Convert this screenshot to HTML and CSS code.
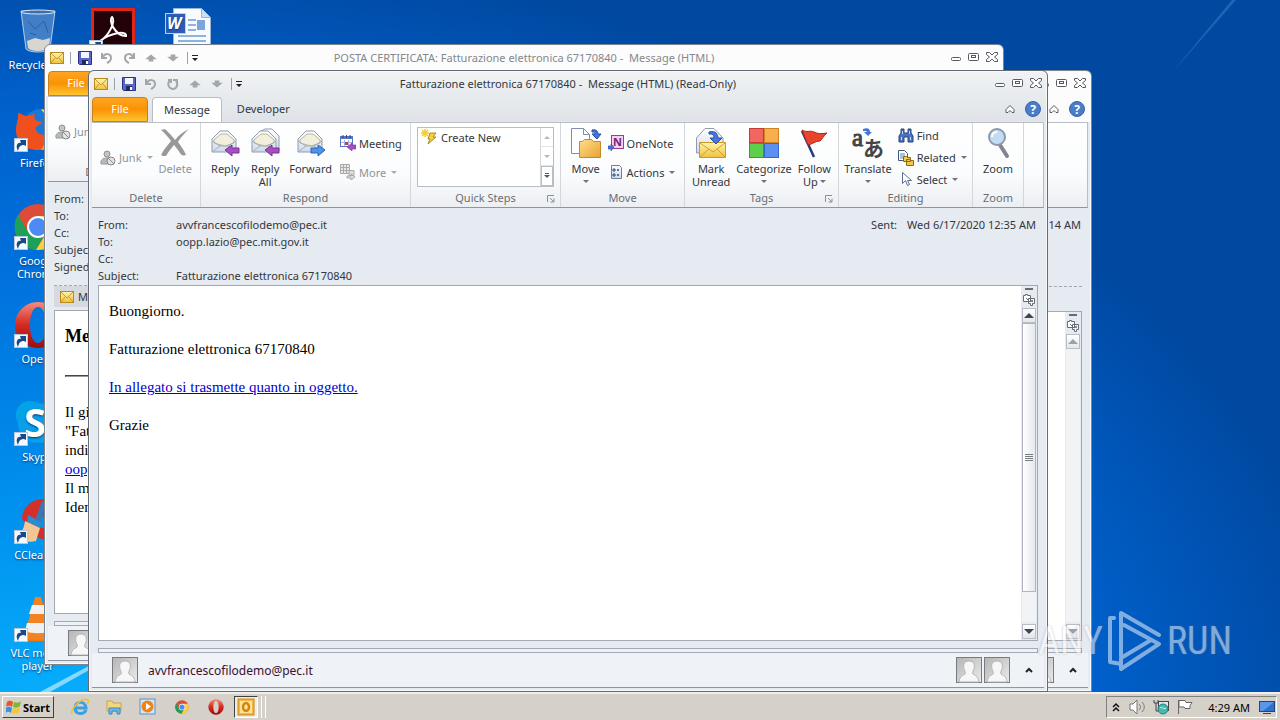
FILE: index.html
```
<!DOCTYPE html>
<html lang="en">
<head>
    <meta charset="UTF-8">
    <meta name="viewport" content="width=device-width, initial-scale=1.0">
    <title>Fatturazione elettronica 67170840 - Message (HTML)</title>
    <link rel="stylesheet" href="styles.css">
</head>
<body>
    <!-- shared icons -->
    <svg class="sprite" aria-hidden="true">
        <defs>
            <linearGradient id="gYellow" x1="0" y1="0" x2="0" y2="1"><stop offset="0" stop-color="#fff3b0"/><stop offset="1" stop-color="#f0c23c"/></linearGradient>
            <linearGradient id="gPaper" x1="0" y1="0" x2="0" y2="1"><stop offset="0" stop-color="#ffffff"/><stop offset="1" stop-color="#cfd9e8"/></linearGradient>
            <linearGradient id="gFolder" x1="0" y1="0" x2="1" y2="1"><stop offset="0" stop-color="#ffdf91"/><stop offset="1" stop-color="#e9a32c"/></linearGradient>
            <linearGradient id="gRed" x1="0" y1="0" x2="0" y2="1"><stop offset="0" stop-color="#f58b7c"/><stop offset=".5" stop-color="#d22a22"/><stop offset="1" stop-color="#a00c0c"/></linearGradient>
            <linearGradient id="gPerson" x1="0" y1="0" x2="1" y2="1"><stop offset="0" stop-color="#b4b4b4"/><stop offset="1" stop-color="#ececec"/></linearGradient>
        </defs>
        <symbol id="mail" viewBox="0 0 14 12">
            <rect x=".5" y=".5" width="13" height="11" fill="url(#gYellow)" stroke="#b98a1e"/>
            <path d="M1 1l6 6 6-6M1 11l4-5M13 11l-4-5" fill="none" stroke="#c79a2c"/>
        </symbol>
        <symbol id="save" viewBox="0 0 14 14">
            <path d="M.5.5h13v13h-12l-1-1z" fill="#5a66c8" stroke="#2b3282"/>
            <path d="M3 1h8v6H3z" fill="#f4f6ff"/>
            <path d="M4 9h6v5H4z" fill="#23285e"/><path d="M8 10h2v3H8z" fill="#fff"/>
        </symbol>
        <symbol id="undo" viewBox="0 0 14 14"><path d="M2 2v5h5M3 6c2-4 8-4 8 1 0 3-2 4-4 5" fill="none" stroke="#a3a6aa" stroke-width="2"/></symbol>
        <symbol id="redo" viewBox="0 0 14 14"><path d="M12 2v5H7M11 6C9 2 3 2 3 7c0 3 2 4 4 5" fill="none" stroke="#a3a6aa" stroke-width="2"/></symbol>
        <symbol id="repeat" viewBox="0 0 14 14"><path d="M4 3C0 8 4 12 7 12s6-4 3-8M7 3h4v4M2 3h3v3" fill="none" stroke="#a3a6aa" stroke-width="2"/></symbol>
        <symbol id="up" viewBox="0 0 12 12"><path d="M6 3l5 4H8v2H4V7H1z" fill="#a3a6aa"/></symbol>
        <symbol id="down" viewBox="0 0 12 12"><path d="M6 9l5-4H8V3H4v2H1z" fill="#a3a6aa"/></symbol>
        <symbol id="qat" viewBox="0 0 8 8"><path d="M1 1h6v1H1zM1 4h6L4 7z" fill="#222"/></symbol>
        <symbol id="win-min" viewBox="0 0 12 12"><rect x="1.5" y="5.5" width="9" height="3" rx="1" fill="#fff" stroke="#555a62"/></symbol>
        <symbol id="win-max" viewBox="0 0 12 12"><rect x=".5" y="1.5" width="10" height="7" rx="1" fill="#fff" stroke="#555a62"/><rect x="3.5" y="3.5" width="4" height="2" fill="#fff" stroke="#555a62"/></symbol>
        <symbol id="win-close" viewBox="0 0 12 12"><path d="M.5.5h3L6 3 8.500.5h3v2l-3 2.500 3 2.500v2h-3L6 7 3.500 9.500h-3v-2L3.500 5l-3-2.500z" fill="#fff" stroke="#555a62"/></symbol>
        <symbol id="collapse" viewBox="0 0 10 10"><path d="M1 5.500l4-4 4 4v3H7l-2-2-2 2H1z" fill="#fff" stroke="#555a62"/></symbol>
        <symbol id="junk" viewBox="0 0 16 16">
            <circle cx="7" cy="4" r="3" fill="#c4c4c4" stroke="#909090"/>
            <path d="M1 14c-1-5 3-6 6-6s6 1 6 6z" fill="#b9b9b9" stroke="#999"/>
            <circle cx="11" cy="11" r="4" fill="#e4e4e4" stroke="#888"/><path d="M8 8l6 6" stroke="#888"/>
        </symbol>
        <symbol id="delete" viewBox="0 0 32 32">
            <path d="M2 3c3-1 5-1 6 1 3 3 6 6 8 9 4-5 8-8 14-11-5 5-9 9-11 13 3 4 6 8 8 13-3 1-5 0-6-2-2-3-4-6-6-8-3 4-6 7-8 11-2 0-4 0-5-1 3-6 7-10 10-14C9 10 6 6 2 3z" fill="#999"/>
        </symbol>
        <symbol id="envelope" viewBox="0 0 32 32">
            <path d="M3 12l8-8h8l8 8v13H3z" fill="url(#gPaper)" stroke="#8f9bb0"/>
            <path d="M5 13l7-6h6l7 6v3l-9 3-11-3z" fill="#f2f0dc" stroke="#b9b79c"/>
            <path d="M3 14l8 5h8l8-5M3 25l8-6M27 25l-8-6" fill="none" stroke="#a3adbf"/>
        </symbol>
        <symbol id="reply" viewBox="0 0 32 32">
            <use href="#envelope"/>
            <path d="M16 23l7-5v3h7v5h-7v3z" fill="#a64fc0" stroke="#7d2f98"/>
        </symbol>
        <symbol id="reply-all" viewBox="0 0 32 32">
            <path d="M10 5l6-3h7l7 7v15h-8" fill="url(#gPaper)" stroke="#8f9bb0"/>
            <use href="#reply"/>
        </symbol>
        <symbol id="forward" viewBox="0 0 32 32">
            <use href="#envelope"/>
            <path d="M30 23l-7-5v3h-7v5h7v3z" fill="#4f93ea" stroke="#2b62b5"/>
        </symbol>
        <symbol id="meeting" viewBox="0 0 16 16">
            <rect x=".5" y="1.500" width="12" height="10" fill="#fff" stroke="#5874c4"/><path d="M1 2h11v2H1z" fill="#5874c4"/>
            <path d="M3 0v3M6.500 0v3M10 0v3" stroke="#2b3f8c"/><path d="M1 7.500h11M4.500 5v6M8.500 5v6" stroke="#a5b4e4"/>
            <rect x="5" y="7" width="3" height="3" fill="#d83a2c"/>
            <path d="M7 12l5-4v2h4v4h-4v2z" fill="#a64fc0" stroke="#7d2f98" stroke-width=".6"/>
        </symbol>
        <symbol id="more" viewBox="0 0 16 16">
            <path d="M.5.5h9v9h-9zM.5 3.500h9M.5 6.500h9M3.500 0v9M6.500 0v9" fill="#e8e8e8" stroke="#aaa"/>
            <path d="M9 6.500h5v5H9zM7 12h4v-2l4 3-4 3v-2H7z" fill="#ddd" stroke="#aaa"/>
        </symbol>
        <symbol id="create" viewBox="0 0 16 16">
            <path d="M9 4h6l-3 4h3l-8 7 2-5H7z" fill="#f6cf45" stroke="#a98c2c"/>
            <path d="M4 0v8M0 4h8M1 1l6 6M7 1L1 7" stroke="#f2cf2d" stroke-width="1.500"/>
        </symbol>
        <symbol id="move" viewBox="0 0 32 32">
            <path d="M1.500 1.500h12l6 6v19h-18z" fill="#fff" stroke="#7d8eae"/><path d="M13.500 1.500v6h6" fill="none" stroke="#7d8eae"/>
            <path d="M9.500 14.500h3l2-2h7l2 2h7v16h-21z" fill="url(#gFolder)" stroke="#c08a28"/>
            <path d="M22 3c5-1 6 2 6 4h3l-4 5-5-5h3c0-2-1-2-3-2z" fill="#4576d8" stroke="#284fa6"/>
        </symbol>
        <symbol id="onenote" viewBox="0 0 16 16">
            <rect x="3.500" y=".5" width="12" height="13" fill="#f3d3ef" stroke="#9b3b97"/>
            <text x="5" y="11" font-size="11" font-weight="bold" fill="#7b1f79">N</text>
            <path d="M6 12l-3-3v2H0v3h3v2z" fill="#4576d8" stroke="#284fa6" stroke-width=".6"/>
        </symbol>
        <symbol id="actions" viewBox="0 0 16 16">
            <path d="M3.500 1.500h8l2 2v11h-10z" fill="url(#gPaper)" stroke="#6c7f9e"/>
            <path d="M5 5h2v2H5zM5 10h2v2H5z" fill="none" stroke="#2d4a80"/><path d="M9 6h2M9 11h2" stroke="#2d4a80" stroke-width="1.500"/>
        </symbol>
        <symbol id="unread" viewBox="0 0 32 32">
            <path d="M1.500 11L10 1.500h9l9 9.500v15H1.500z" fill="url(#gPaper)" stroke="#8f9bb0"/>
            <path d="M4.500 15.500h26v15h-26z" fill="url(#gYellow)" stroke="#c99a25"/>
            <path d="M5 16l13 9 12-9M5 30l9-8M30 30l-8-8" fill="none" stroke="#d2a12b"/>
            <path d="M14 5c7-2 9 3 9 6h4l-6 6-6-6h4c0-3-1-4-5-4z" fill="#4576d8" stroke="#284fa6"/>
        </symbol>
        <symbol id="categorize" viewBox="0 0 32 32">
            <rect x="1.500" y="1.500" width="14" height="14" fill="#f26560" stroke="#c33b36"/>
            <rect x="16.500" y="1.500" width="14" height="14" fill="#f7ae4c" stroke="#cf8323"/>
            <rect x="1.500" y="16.500" width="14" height="14" fill="#5cd04c" stroke="#36a028"/>
            <rect x="16.500" y="16.500" width="14" height="14" fill="#5b8ff0" stroke="#3567c9"/>
        </symbol>
        <symbol id="flag" viewBox="0 0 32 32">
            <path d="M4 4l12 26" stroke="#27387c" stroke-width="2.500"/>
            <path d="M4 3c5 3 8 0 12 2s7 2 13 1c-4 3-5 7-7 8-5 0-7 3-12 4z" fill="#e8442e" stroke="#b32713"/>
        </symbol>
        <symbol id="translate" viewBox="0 0 32 32">
            <text x="0" y="19" font-family="Liberation Serif, serif" font-size="25" fill="#444" stroke="#444">a</text>
            <text x="11" y="29" font-family="Noto Sans CJK JP, sans-serif" font-size="21" font-weight="bold" fill="#444">あ</text>
            <path d="M11 2c5-2 7 0 7 3h2l-4 4-4-4h3c0-1-1-1-4-1z" fill="#4576d8"/>
        </symbol>
        <symbol id="find" viewBox="0 0 16 16">
            <path d="M3 1h3v4h4V1h3v4l2 3v6h-5V9H6v5H1V8l2-3z" fill="#4a72be" stroke="#26437f"/>
            <path d="M3.500 9v3M12.500 9v3M4.500 3v3M11.500 3v3" stroke="#c9dbf7"/>
        </symbol>
        <symbol id="related" viewBox="0 0 16 16">
            <path d="M.5.5h6l3 3v7h-9z" fill="#fff" stroke="#3f577f"/><path d="M2 4h5M2 6h5M2 8h4" stroke="#6480ac"/>
            <path d="M5.500 6.500h3l1 1h3v4h-7zM8.500 9.500h3l1 1h3v5h-7z" fill="#f5c945" stroke="#8b6a14"/>
        </symbol>
        <symbol id="select" viewBox="0 0 16 16"><path d="M4.500 1.500v11l3-3 2 5 2-1-2-4h4z" fill="#fff" stroke="#5d6f93"/></symbol>
        <symbol id="magnifier" viewBox="0 0 32 32">
            <path d="M18 18l7 11" stroke="#82878f" stroke-width="4" stroke-linecap="round"/>
            <circle cx="15" cy="10" r="8" fill="#c3dcf5" stroke="#8d99aa" stroke-width="2"/>
            <path d="M10 10c0-4 3-5 5-5" fill="none" stroke="#fff" stroke-width="2"/>
        </symbol>
        <symbol id="launcher" viewBox="0 0 8 8"><path d="M.5 7V.5H7M3 3l4 4M7 3.500V7H3.500" fill="none" stroke="#888f99"/></symbol>
        <symbol id="browse" viewBox="0 0 12 12">
            <path d="M.5 1.500h2v-1h2v1h3v6h-7zM5.500 4.500h6v5h-2v2h-2v-2h-2z" fill="#fff" stroke="#666b74"/><path d="M3 4l2 2M7 6l3 2M10 6L7 8" stroke="#666b74"/>
        </symbol>
        <symbol id="person" viewBox="0 0 26 26">
            <rect x=".5" y=".5" width="25" height="25" fill="url(#gPerson)" stroke="#777b80"/>
            <path d="M13 4c5 0 6 4 5 8-1 3-2 3-1 5 2 2 5 1 6 8H3c1-7 4-6 6-8 1-2 0-2-1-5-1-4 0-8 5-8z" fill="#f7f7f7" stroke="#b5b5b5"/>
        </symbol>
        <symbol id="chevron" viewBox="0 0 10 10"><path d="M2 7l3-3 3 3" fill="none" stroke="#222" stroke-width="2"/></symbol>
        <symbol id="arrow" viewBox="0 0 14 14">
            <rect x=".5" y=".5" width="13" height="13" fill="#f5f8fc" stroke="#b7c6d8"/>
            <path d="M4 13C1 7 4 4 7 5L6 2h6v6l-2-1c-4 0-5 2-6 6z" fill="#174a8c"/>
        </symbol>
        <symbol id="chrome" viewBox="0 0 48 48">
            <circle cx="24" cy="24" r="23" fill="#dd4b39"/>
            <path d="M4 12a23 23 0 0 0 18 35l10-18H14z" fill="#1ea05a"/>
            <path d="M22 47a23 23 0 0 0 22-34H24l9 16z" fill="#fdd043"/>
            <circle cx="24" cy="24" r="11" fill="#fff"/><circle cx="24" cy="24" r="9" fill="#4c8bf5"/>
        </symbol>
        <symbol id="opera" viewBox="0 0 48 48">
            <path fill-rule="evenodd" d="M24 1a23 23 0 1 0 .1 0zM24 6c5 0 8 8 8 18s-3 18-8 18-8-8-8-18 3-18 8-18z" fill="url(#gRed)"/>
        </symbol>
    </svg>

    <main class="desktop">
        <svg class="rays" viewBox="0 0 1280 692" preserveAspectRatio="none" aria-hidden="true">
            <path d="M40 692L100 660v4L50 692z" fill="#bfeaff" fill-opacity=".7"/>
            <path d="M1170 75L1232 0h4z" fill="#6aa6e4" fill-opacity=".3"/>
        </svg>

        <nav class="shortcuts">
            <a class="shortcut" href="#">
                <svg class="pic" viewBox="0 0 48 48"><path d="M7 4h34l-5 38c-3 4-21 4-24 0z" fill="#8fb4dc" fill-opacity=".45" stroke="#b5cce6"/><ellipse cx="24" cy="5" rx="17" ry="2" fill="#3f6eae" stroke="#dbe7f4"/><path d="M13 34l8-3 8 2 7-2-1 10c-4 4-18 4-21 0z" fill="#d9d6d2"/><path d="M14 14l7 8 9-8 4 12M16 26l6 2" fill="none" stroke="#2f5da0"/></svg>
                <span>Recycle Bin</span>
            </a>
            <a class="shortcut" href="#">
                <svg class="pic" viewBox="0 0 48 48">
                    <circle cx="27" cy="23" r="19" fill="#1a78d8"/><path d="M27 4c12 2 19 10 19 19l-8-6c-4-6-8-8-11-13z" fill="#ffd83a"/>
                    <path d="M4 8c3 0 5 3 9 3l8-2c-1 3-1 5 2 7l5 1c-1 4-8 3-6 8 3 6 10 6 16 2 4-3 5-6 8-8 0 16-8 26-22 26S2 36 2 25C2 18 5 14 4 8z" fill="#f0501e"/>
                    <path d="M30 40c10-3 14-9 15-17 2 9-3 22-18 22z" fill="#ff9d1c"/></svg>
                <svg class="arrow"><use href="#arrow"/></svg>
                <span>Firefox</span>
            </a>
            <a class="shortcut" href="#">
                <svg class="pic"><use href="#chrome"/></svg>
                <svg class="arrow"><use href="#arrow"/></svg>
                <span>Google Chrome</span>
            </a>
            <a class="shortcut" href="#">
                <svg class="pic"><use href="#opera"/></svg>
                <svg class="arrow"><use href="#arrow"/></svg>
                <span>Opera</span>
            </a>
            <a class="shortcut" href="#">
                <svg class="pic" viewBox="0 0 48 48"><circle cx="16" cy="16" r="14" fill="#00a5e6"/><circle cx="32" cy="32" r="14" fill="#0088d4"/><circle cx="24" cy="24" r="20" fill="#08a0e8"/><text x="10" y="38" font-size="40" font-weight="bold" fill="#fff">S</text></svg>
                <svg class="arrow"><use href="#arrow"/></svg>
                <span>Skype</span>
            </a>
            <a class="shortcut" href="#">
                <svg class="pic" viewBox="0 0 48 48"><path d="M42 8A20 20 0 0 0 8 22l10 12c4 8 16 12 24 6L34 30c-8 4-14-4-6-10z" fill="#d3302b"/><path d="M28 4l4 2-6 22-6-2z" fill="#3678b8"/><path d="M14 18l13 7-1 6-13-6z" fill="#2f8bd0"/><path d="M11 24l15 7-4 13c-8 2-16 0-20-5 6-3 8-8 9-15z" fill="#f1c894"/></svg>
                <svg class="arrow"><use href="#arrow"/></svg>
                <span>CCleaner</span>
            </a>
            <a class="shortcut" href="#">
                <svg class="pic" viewBox="0 0 48 48"><path d="M8 38h32l4 8H4z" fill="#f07a10"/><path d="M21 2h6l11 40c-6 4-22 4-28 0z" fill="#f58220"/><path d="M18 10h12l3 9H15zM13 28h22l2 8c-6 3-20 3-26 0z" fill="#eef0f2"/></svg>
                <svg class="arrow"><use href="#arrow"/></svg>
                <span>VLC media player</span>
            </a>
            <a class="shortcut top" href="#" aria-label="Acrobat Reader">
                <svg class="pic" viewBox="0 0 48 48"><path d="M2 1h44v44H2z" fill="#e1251b"/><path d="M5 4h38v38H5z" fill="#230309"/><path d="M11 34c9-5 16-20 12-24-4 3 3 19 14 19 1-6-16-3-26 5z" fill="none" stroke="#fff" stroke-width="2"/></svg>
                <svg class="arrow"><use href="#arrow"/></svg>
            </a>
            <a class="shortcut top" href="#" aria-label="Word document">
                <svg class="pic" viewBox="0 0 48 48"><path d="M9.500 1.500h28l9 9v35h-37z" fill="#f7fafe" stroke="#9bb4d6"/><path d="M37.500 1.500v9h9" fill="#cfdff3" stroke="#9bb4d6"/><path d="M24 13h8M24 18h8M24 23h8M14 29h28M14 34h28M14 39h28" stroke="#8fb3e0" stroke-width="2"/><path d="M33 13h8v10h-8z" fill="#7ba5dd"/><rect x="1.500" y="6.500" width="20" height="20" fill="#2d5bb5" stroke="#b9cff0"/><text x="3" y="22" font-size="16" font-weight="bold" fill="#fff" font-style="italic">W</text></svg>
            </a>
        </nav>

        <!-- certified mail message, back left -->
        <section class="window inactive window-left">
            <header class="titlebar">
                <div class="qat">
                    <svg class="i14"><use href="#mail"/></svg><i class="sep"></i>
                    <button aria-label="Save"><svg class="i14"><use href="#save"/></svg></button>
                    <button aria-label="Undo"><svg class="i14"><use href="#undo"/></svg></button>
                    <button aria-label="Redo"><svg class="i14"><use href="#redo"/></svg></button>
                    <button aria-label="Previous"><svg class="i14"><use href="#up"/></svg></button>
                    <button aria-label="Next"><svg class="i14"><use href="#down"/></svg></button>
                    <i class="sep"></i>
                    <button class="narrow" aria-label="Customize"><svg class="i8"><use href="#qat"/></svg></button>
                </div>
                <h2>POSTA CERTIFICATA: Fatturazione elettronica 67170840 -&nbsp; Message (HTML)</h2>
                <div class="controls">
                    <button aria-label="Minimize"><svg class="i12"><use href="#win-min"/></svg></button>
                    <button aria-label="Maximize"><svg class="i12"><use href="#win-max"/></svg></button>
                    <button aria-label="Close"><svg class="i12"><use href="#win-close"/></svg></button>
                </div>
            </header>
            <div class="tabs"><button class="file">File</button></div>
            <div class="ribbon">
                <div class="group g-delete">
                    <div class="tools">
                        <div class="small"><button class="off"><svg class="i16"><use href="#junk"/></svg>Junk</button></div>
                    </div>
                    <div class="group-name">Delete</div>
                </div>
            </div>
            <dl class="fields">
                <dt>From:</dt><dd></dd>
                <dt>To:</dt><dd></dd>
                <dt>Cc:</dt><dd></dd>
                <dt>Subject:</dt><dd></dd>
                <dt>Signed By:</dt><dd></dd>
            </dl>
            <div class="attachments"><span><svg class="i14"><use href="#mail"/></svg>Message</span></div>
            <div class="reader">
                <article class="mail certified">
                    <h3>Messaggio</h3>
                    <hr>
                    <p>Il giorno<br>"Fatturazione<br>indirizzato<br><a href="#">oopp.lazio</a><br>Il messaggio<br>Identificativo</p>
                </article>
            </div>
            <div class="splitter"></div>
            <footer class="people"><svg class="i26"><use href="#person"/></svg></footer>
        </section>

        <!-- message window, back right -->
        <section class="window inactive window-right">
            <header class="titlebar">
                <div class="controls">
                    <button aria-label="Minimize"><svg class="i12"><use href="#win-min"/></svg></button>
                    <button aria-label="Maximize"><svg class="i12"><use href="#win-max"/></svg></button>
                    <button aria-label="Close"><svg class="i12"><use href="#win-close"/></svg></button>
                </div>
            </header>
            <div class="tabs">
                <div class="tab-end">
                    <button aria-label="Collapse ribbon"><svg class="i10"><use href="#collapse"/></svg></button>
                    <button class="help">?</button>
                </div>
            </div>
            <div class="ribbon"></div>
            <div class="fields"><div class="sent"><span>14 AM</span></div></div>
            <div class="attachments"></div>
            <div class="reader">
                <div class="scroll">
                    <i class="split"></i>
                    <button aria-label="Browse"><svg class="i12"><use href="#browse"/></svg></button>
                    <button class="step" aria-label="Scroll up"><i class="tri-up"></i></button>
                    <div class="track"></div>
                    <button class="step" aria-label="Scroll down"><i class="tri-down"></i></button>
                </div>
            </div>
            <div class="splitter"></div>
            <footer class="people">
                <div class="people-end"><svg class="i26"><use href="#person"/></svg><button aria-label="Expand"><svg class="i10"><use href="#chevron"/></svg></button></div>
            </footer>
        </section>

        <!-- front window -->
        <section class="window window-front">
            <header class="titlebar">
                <div class="qat">
                    <svg class="i14"><use href="#mail"/></svg><i class="sep"></i>
                    <button aria-label="Save"><svg class="i14"><use href="#save"/></svg></button>
                    <button aria-label="Undo"><svg class="i14"><use href="#undo"/></svg></button>
                    <button aria-label="Repeat"><svg class="i14"><use href="#repeat"/></svg></button>
                    <button aria-label="Previous"><svg class="i14"><use href="#up"/></svg></button>
                    <button aria-label="Next"><svg class="i14"><use href="#down"/></svg></button>
                    <i class="sep"></i>
                    <button class="narrow" aria-label="Customize"><svg class="i8"><use href="#qat"/></svg></button>
                </div>
                <h2>Fatturazione elettronica 67170840 -&nbsp; Message (HTML) (Read-Only)</h2>
                <div class="controls">
                    <button aria-label="Minimize"><svg class="i12"><use href="#win-min"/></svg></button>
                    <button aria-label="Maximize"><svg class="i12"><use href="#win-max"/></svg></button>
                    <button aria-label="Close"><svg class="i12"><use href="#win-close"/></svg></button>
                </div>
            </header>

            <div class="tabs">
                <button class="file">File</button>
                <button class="tab active">Message</button>
                <button class="tab">Developer</button>
                <div class="tab-end">
                    <button aria-label="Collapse ribbon"><svg class="i10"><use href="#collapse"/></svg></button>
                    <button class="help">?</button>
                </div>
            </div>

            <div class="ribbon">
                <div class="group g-delete">
                    <div class="tools">
                        <div class="small"><button class="off"><svg class="i16"><use href="#junk"/></svg>Junk<i class="caret"></i></button></div>
                        <button class="big off"><svg class="i32"><use href="#delete"/></svg>Delete</button>
                    </div>
                    <div class="group-name">Delete</div>
                </div>
                <div class="group g-respond">
                    <div class="tools">
                        <button class="big"><svg class="i32"><use href="#reply"/></svg>Reply</button>
                        <button class="big"><svg class="i32"><use href="#reply-all"/></svg>Reply<br>All</button>
                        <button class="big"><svg class="i32"><use href="#forward"/></svg>Forward</button>
                        <div class="small two">
                            <button><svg class="i16"><use href="#meeting"/></svg>Meeting</button>
                            <button class="off"><svg class="i16"><use href="#more"/></svg>More<i class="caret"></i></button>
                        </div>
                    </div>
                    <div class="group-name">Respond</div>
                </div>
                <div class="group g-steps">
                    <div class="tools">
                        <div class="gallery">
                            <button class="step-item"><svg class="i16"><use href="#create"/></svg>Create New</button>
                            <div class="gallery-scroll">
                                <button aria-label="Row up"><i class="tri-up"></i></button>
                                <button aria-label="Row down"><i class="tri-down"></i></button>
                                <button class="all" aria-label="More steps"><i class="tri-down"></i></button>
                            </div>
                        </div>
                    </div>
                    <div class="group-name">Quick Steps<svg class="i8 launcher"><use href="#launcher"/></svg></div>
                </div>
                <div class="group g-move">
                    <div class="tools">
                        <button class="big"><svg class="i32"><use href="#move"/></svg>Move<i class="caret"></i></button>
                        <div class="small two">
                            <button><svg class="i16"><use href="#onenote"/></svg>OneNote</button>
                            <button><svg class="i16"><use href="#actions"/></svg>Actions<i class="caret"></i></button>
                        </div>
                    </div>
                    <div class="group-name">Move</div>
                </div>
                <div class="group g-tags">
                    <div class="tools">
                        <button class="big"><svg class="i32"><use href="#unread"/></svg>Mark<br>Unread</button>
                        <button class="big"><svg class="i32"><use href="#categorize"/></svg>Categorize<i class="caret"></i></button>
                        <button class="big"><svg class="i32"><use href="#flag"/></svg>Follow<span>Up<i class="caret"></i></span></button>
                    </div>
                    <div class="group-name">Tags<svg class="i8 launcher"><use href="#launcher"/></svg></div>
                </div>
                <div class="group g-editing">
                    <div class="tools">
                        <button class="big"><svg class="i32"><use href="#translate"/></svg>Translate<i class="caret"></i></button>
                        <div class="small">
                            <button><svg class="i16"><use href="#find"/></svg>Find</button>
                            <button><svg class="i16"><use href="#related"/></svg>Related<i class="caret"></i></button>
                            <button><svg class="i16"><use href="#select"/></svg>Select<i class="caret"></i></button>
                        </div>
                    </div>
                    <div class="group-name">Editing</div>
                </div>
                <div class="group g-zoom">
                    <div class="tools">
                        <button class="big"><svg class="i32"><use href="#magnifier"/></svg>Zoom</button>
                    </div>
                    <div class="group-name">Zoom</div>
                </div>
            </div>

            <div class="envelope-info">
                <dl class="fields">
                    <dt>From:</dt><dd>avvfrancescofilodemo@pec.it</dd>
                    <dt>To:</dt><dd>oopp.lazio@pec.mit.gov.it</dd>
                    <dt>Cc:</dt><dd></dd>
                    <dt>Subject:</dt><dd>Fatturazione elettronica 67170840</dd>
                </dl>
                <div class="sent"><span>Sent:</span><span>Wed 6/17/2020 12:35 AM</span></div>
            </div>

            <div class="reader">
                <article class="mail">
                    <p>Buongiorno.</p>
                    <p>Fatturazione elettronica 67170840</p>
                    <p><a href="#">In allegato si trasmette quanto in oggetto.</a></p>
                    <p>Grazie</p>
                </article>
                <div class="scroll">
                    <i class="split"></i>
                    <button aria-label="Browse"><svg class="i12"><use href="#browse"/></svg></button>
                    <button class="step" aria-label="Scroll up"><i class="tri-up"></i></button>
                    <div class="track"><div class="thumb"><i></i></div></div>
                    <button class="step" aria-label="Scroll down"><i class="tri-down"></i></button>
                </div>
            </div>
            <div class="splitter"></div>
            <footer class="people">
                <svg class="i26"><use href="#person"/></svg>
                <span class="who">avvfrancescofilodemo@pec.it</span>
                <div class="people-end">
                    <svg class="i26"><use href="#person"/></svg><svg class="i26"><use href="#person"/></svg>
                    <button aria-label="Expand"><svg class="i10"><use href="#chevron"/></svg></button>
                </div>
            </footer>
        </section>

        <div class="watermark">
            <span>ANY</span>
            <svg viewBox="0 0 56 62"><path d="M7 8H3V52L14 54M14 46V3L52 25M17 15L52 34L14 59V48L44 30" fill="none" stroke="#fff" stroke-width="4" stroke-linejoin="round" stroke-linecap="round"/></svg>
            <span>RUN</span>
        </div>
    </main>

    <footer class="taskbar">
        <button class="start"><svg class="i16" viewBox="0 0 16 16"><path d="M1 3c3-2 4-1 6 0L6 8C4 7 3 6 0 8z" fill="#e8542c"/><path d="M8 3c3 1 5 1 7-1l-1 5c-3 2-4 2-7 1z" fill="#7cb832"/><path d="M0 9c3-2 4-1 6 0l-1 5c-2-1-3-2-5 0z" fill="#3d8ee0"/><path d="M7 9c3 1 4 1 7-1l-1 5c-2 2-4 2-7 1z" fill="#f8c62d"/></svg>Start</button>
        <div class="launch">
            <button aria-label="Internet Explorer"><svg class="i18" viewBox="0 0 18 18"><path d="M15 12c-2 5-11 5-11-2s10-8 11 0H5" fill="none" stroke="#3aa0e4" stroke-width="3"/><path d="M1 16C-1 10 12-1 17 2c1 2 0 3-1 4" fill="none" stroke="#efbf36" stroke-width="1.500"/></svg></button>
            <button aria-label="Explorer"><svg class="i18" viewBox="0 0 18 18"><path d="M2 3h5l1 2h8v8H2z" fill="#f3d67e" stroke="#c9a44a"/><path d="M4 16v-6h11v6h-3v-3H7v3z" fill="#6cb8ea" stroke="#3c86bd"/></svg></button>
            <button aria-label="Media Player"><svg class="i18" viewBox="0 0 18 18"><rect x="1" y="1" width="15" height="15" fill="#d3e4f5" stroke="#5a8fcf"/><circle cx="8.500" cy="8.500" r="6" fill="#f08316"/><path d="M7 5l5 3.500L7 12z" fill="#fff"/></svg></button>
            <button aria-label="Chrome"><svg class="i14"><use href="#chrome"/></svg></button>
            <button aria-label="Opera"><svg class="i16"><use href="#opera"/></svg></button>
            <button class="pressed" aria-label="Outlook"><svg class="i18" viewBox="0 0 18 18"><rect x="1" y="1" width="16" height="16" fill="#f6b73c" stroke="#c8881a"/><rect x="3" y="3" width="12" height="12" fill="#fce3a4"/><ellipse cx="9" cy="9" rx="3" ry="4" fill="none" stroke="#d58609" stroke-width="2.500"/></svg></button>
        </div>
        <div class="tray">
            <svg class="i10" viewBox="0 0 10 10"><path d="M2 5l3-3 3 3M2 9l3-3 3 3" fill="none" stroke="#111" stroke-width="1.500"/></svg>
            <svg class="i16" viewBox="0 0 16 16"><path d="M1 5h3l4-4v14l-4-4H1z" fill="#fff" stroke="#777"/><path d="M10 5c2 2 2 4 0 6M13 3c3 3 3 7 0 10" fill="none" stroke="#777"/></svg>
            <svg class="i16" viewBox="0 0 16 16"><rect x="5.500" y="2.500" width="10" height="9" fill="#dfe9f2" stroke="#444"/><path d="M1 1v3h4V1M3 4v8h4" fill="none" stroke="#444"/><circle cx="10" cy="10" r="5" fill="#46b8b0" stroke="#22837c"/><path d="M7 9c2-2 3 2 6 0" stroke="#d8f4f0" fill="none"/></svg>
            <svg class="i16" viewBox="0 0 16 16"><path d="M1.500 1v14M2 1.500h6l1 2h6l-2 3v3H8L7 8H2z" fill="#fff" stroke="#666"/></svg>
            <time>4:29 AM</time>
            <svg class="i16" viewBox="0 0 16 16"><rect x=".5" y="2.500" width="15" height="10" fill="#2f6fd0" stroke="#24427c"/><path d="M1 3h14L4 12H1z" fill="#5b97e8"/><path d="M4 14.500h8" stroke="#444"/></svg>
        </div>
    </footer>
</body>
</html>
```

FILE: styles.css
```
* {
    box-sizing: border-box;
    margin: 0;
    padding: 0;
}

body {
    display: flex;
    flex-direction: column;
    height: 100vh;
    overflow: hidden;
    font-family: "Noto Sans", "Open Sans", sans-serif;
    font-size: 11px;
    line-height: 13px;
    color: #33373d;
}

button {
    font: inherit;
    color: inherit;
    background: none;
    border: none;
    display: flex;
    align-items: center;
    justify-content: center;
}

svg {
    display: block;
    flex: none;
}

.sprite {
    position: absolute;
    width: 0;
    height: 0;
}

.i8 { width: 8px; height: 8px; }
.i10 { width: 10px; height: 10px; }
.i12 { width: 12px; height: 12px; }
.i14 { width: 14px; height: 14px; }
.i16 { width: 16px; height: 16px; }
.i18 { width: 18px; height: 18px; }
.i26 { width: 26px; height: 26px; }
.i32 { width: 32px; height: 32px; }

/* desktop */
.desktop {
    position: relative;
    flex: 1;
    overflow: hidden;
    background: radial-gradient(ellipse 1300px 800px at 60px 740px, #08b4ff 0%, #0092ee 28%, #0070dc 60%, #0060ca 80%, #0048a0 100%);
}

.rays {
    position: absolute;
    width: 100%;
    height: 100%;
}

.shortcuts {
    position: relative;
    display: grid;
    grid-auto-flow: column;
    grid-template-rows: repeat(7, 98px);
    grid-auto-columns: 75px;
    height: 100%;
}

.shortcut {
    position: relative;
    display: flex;
    flex-direction: column;
    align-items: center;
    gap: 3px;
    padding-top: 7px;
    color: #fff;
    text-align: center;
    text-decoration: none;
    text-shadow: 0 1px 2px #003a78;
}

.shortcut.top {
    grid-row: 1;
}

.shortcut .pic {
    width: 48px;
    height: 48px;
}

.shortcut span {
    width: 64px;
}

.arrow {
    position: absolute;
    left: 14px;
    top: 40px;
    width: 14px;
    height: 14px;
}

/* windows */
.window {
    position: absolute;
    display: flex;
    flex-direction: column;
    padding: 0 3px 3px;
    background: #e6eaf1;
    border: 1px solid #636a73;
    border-radius: 6px 6px 0 0;
    box-shadow: inset 0 0 0 1px #f7f9fb;
}

.window-left {
    top: 44px;
    left: 44px;
    right: 276px;
    bottom: 27px;
}

.window-right {
    top: 70px;
    left: 132px;
    right: 188px;
    bottom: 0;
}

.window-front {
    top: 70px;
    left: 88px;
    right: 232px;
    bottom: 0;
    background: linear-gradient(#f1f3f5, #dfe3e7 50px, #e6eaf1 51px);
}

.inactive {
    background: linear-gradient(#fcfcfd 51px, #e6eaf1 51px);
    border-color: #7d858f;
}

.titlebar {
    display: grid;
    grid-template-columns: 1fr auto 1fr;
    align-items: center;
    height: 25px;
}

.titlebar h2 {
    grid-column: 2;
    font-size: 11px;
    font-weight: normal;
}

.inactive h2 {
    color: #85888c;
}

.qat {
    display: flex;
    align-items: center;
    gap: 6px;
    padding-left: 2px;
}

.qat button {
    width: 16px;
    height: 20px;
}

.qat .narrow {
    width: 8px;
    margin-left: -3px;
}

.sep {
    width: 1px;
    height: 12px;
    background: #9ba1a9;
}

.controls {
    grid-column: 3;
    justify-self: end;
    display: flex;
    gap: 6px;
    padding-right: 2px;
}

.tabs {
    display: flex;
    align-items: flex-end;
    gap: 4px;
    height: 26px;
}

.file,
.tab {
    height: 25px;
    padding-bottom: 2px;
    border-radius: 4px 4px 0 0;
}

.file {
    width: 56px;
    color: #fff;
    background: linear-gradient(#ffa51f, #f99306 50%, #ffc32e);
    border: 1px solid #c9801c;
}

.tab {
    padding-left: 11px;
    padding-right: 11px;
}

.tab.active {
    background: #fff;
    border: 1px solid #b9bec6;
    border-bottom: none;
}

.tab-end {
    display: flex;
    align-items: center;
    gap: 10px;
    height: 26px;
    margin-left: auto;
    padding-right: 3px;
}

.help {
    width: 16px;
    height: 16px;
    color: #fff;
    font-size: 12px;
    font-weight: bold;
    background: #4a7cc9;
    border: 1px solid #3463ab;
    border-radius: 50%;
}

/* ribbon */
.ribbon {
    display: flex;
    height: 86px;
    background: linear-gradient(#fff, #fbfcfd 60%, #eceff2);
    border: 1px solid #8f969f;
    border-top-color: #b9bec6;
    border-right-color: #b9bec6;
    border-left: none;
}

.group {
    display: flex;
    flex-direction: column;
    border-right: 1px solid #d3d7dc;
}

.g-delete { width: 109px; }
.g-respond { width: 210px; }
.g-steps { width: 150px; }
.g-move { width: 124px; }
.g-tags { width: 154px; }
.g-editing { width: 134px; }
.g-zoom { width: 51px; }

.tools {
    display: flex;
    justify-content: center;
    gap: 6px;
    height: 67px;
    padding-top: 2px;
    white-space: nowrap;
}

.g-respond .tools {
    gap: 8px;
}

.window-left .tools {
    justify-content: flex-start;
    padding-left: 7px;
}

.group-name {
    position: relative;
    height: 16px;
    line-height: 16px;
    text-align: center;
    color: #696e75;
}

.launcher {
    position: absolute;
    right: 5px;
    top: 5px;
}

.big {
    flex-direction: column;
    justify-content: flex-start;
    padding-top: 2px;
}

.big .i32 {
    margin-bottom: 3px;
}

.big span {
    display: flex;
    align-items: center;
}

.big > .caret {
    margin: 5px 0 0;
}

.small {
    display: flex;
    flex-direction: column;
    justify-content: center;
    align-items: flex-start;
}

.small button {
    gap: 3px;
    height: 22px;
}

.small.two button {
    height: 29px;
}

.off {
    color: #8f9399;
}

.caret {
    border: 3px solid transparent;
    border-top-color: #6f747b;
    border-bottom: none;
    margin-left: 2px;
}

.off .caret {
    border-top-color: #a9acb1;
}

.gallery {
    display: flex;
    justify-content: space-between;
    align-items: flex-start;
    width: 137px;
    height: 60px;
    margin-top: 2px;
    background: #fff;
    border: 1px solid #b9bec6;
}

.step-item {
    gap: 4px;
    height: 18px;
    padding-left: 3px;
}

.gallery-scroll {
    display: flex;
    flex-direction: column;
    align-self: stretch;
    width: 13px;
    color: #b5b8bc;
    border-left: 1px solid #d3d7dc;
}

.gallery-scroll button {
    flex: 1;
    border-bottom: 1px solid #e2e5e8;
}

.gallery-scroll .all {
    color: #555a62;
    border: 1px solid #b9bec6;
}

.tri-up,
.tri-down {
    border: 3px solid transparent;
}

.tri-up {
    border-top: none;
    border-bottom-color: currentColor;
}

.tri-down {
    border-bottom: none;
    border-top-color: currentColor;
}

.all .tri-down {
    box-shadow: 0 -3px 0 -1px currentColor;
}

/* message header */
.envelope-info {
    display: flex;
    justify-content: space-between;
}

.fields {
    display: grid;
    grid-template-columns: 78px 1fr;
    grid-auto-rows: 17px;
    align-items: center;
    padding: 8px 6px 1px;
}

.sent {
    display: flex;
    align-items: center;
    gap: 10px;
    height: 17px;
    margin-top: 8px;
    padding-right: 8px;
}

.reader {
    display: flex;
    flex: 1;
    min-height: 0;
    overflow: hidden;
    margin: 0 6px;
    background: #fff;
    border: 1px solid #a3a9b3;
}

.mail {
    flex: 1;
    padding: 0 10px;
    font: 15px/19px "Liberation Serif", serif;
    color: #000;
    white-space: nowrap;
}

.mail p {
    margin-top: 16px;
    margin-bottom: 19px;
}

.mail p + p {
    margin-top: 0;
}

.mail a {
    color: #00c;
}

.scroll {
    display: flex;
    flex-direction: column;
    align-items: center;
    width: 16px;
    margin-left: auto;
    padding: 1px;
    background: #e6eaf1;
}

.split {
    width: 8px;
    height: 2px;
    margin: 1px 2px 4px;
    background: #666b74;
}

.scroll .step {
    width: 14px;
    height: 15px;
    margin-top: 2px;
    background: linear-gradient(#fff, #e3e6ea);
    border: 1px solid #b9bec6;
    color: #3f4654;
}

.step .tri-up,
.step .tri-down {
    border-left-width: 5px;
    border-right-width: 5px;
}

.step .tri-up {
    border-bottom-width: 5px;
}

.step .tri-down {
    border-top-width: 5px;
}

.inactive .step {
    color: #9aa0ab;
}

.track {
    flex: 1;
    align-self: stretch;
    background: #f2f3f5;
}

.thumb {
    display: flex;
    align-items: center;
    justify-content: center;
    height: 90%;
    background: linear-gradient(90deg, #fff, #e6e8eb);
    border: 1px solid #b0b5bd;
}

.thumb i {
    width: 8px;
    height: 8px;
    background: repeating-linear-gradient(#777c85 0 1px, transparent 1px 2px);
}

.splitter {
    height: 5px;
    margin: 7px 6px 0;
    background: #eef1f5;
    border: 1px solid #a3a9b3;
}

.people {
    display: flex;
    align-items: center;
    gap: 10px;
    height: 35px;
    padding: 0 10px 0 20px;
    background: #eff2f6;
    border-bottom: 1px solid #8f969f;
}

.who {
    font-size: 12px;
    color: #3a1030;
}

.people-end {
    display: flex;
    align-items: center;
    gap: 2px;
    margin-left: auto;
}

.people-end button {
    margin-left: 12px;
}

/* back windows */
.inactive .fields {
    padding-bottom: 10px;
}

.window-right .fields {
    display: flex;
    justify-content: flex-end;
    align-items: flex-start;
    height: 78px;
    padding: 0;
}

.window-right .sent {
    padding-right: 7px;
}

.attachments {
    height: 25px;
    margin: 0 6px;
    border-top: 1px dashed #a3a9b3;
}

.attachments span {
    display: inline-flex;
    align-items: center;
    gap: 4px;
    height: 21px;
    padding: 0 6px;
    background: #d6dade;
}

.certified h3 {
    margin-top: 16px;
    font-size: 18px;
}

.certified hr {
    margin: 29px 0 26px;
    border: 1px inset #999;
}

/* watermark */
.watermark {
    position: absolute;
    right: 48px;
    bottom: 20px;
    display: flex;
    align-items: center;
    gap: 4px;
    font-family: "Roboto Condensed", "Liberation Sans Narrow", Roboto, sans-serif;
    font-size: 38px;
    line-height: 62px;
    color: #fff;
    opacity: .5;
    text-shadow: 0 0 2px #778;
}

.watermark svg {
    width: 56px;
    height: 62px;
}

/* taskbar */
.taskbar {
    display: flex;
    align-items: center;
    height: 28px;
    padding: 0 3px 0 2px;
    background: #d5d1c9;
    border-top: 2px solid #f1efeb;
}

.start {
    gap: 1px;
    width: 52px;
    height: 22px;
    font-weight: bold;
    color: #000;
    border: 1px solid;
    border-color: #fff #404040 #404040 #fff;
}

.launch {
    display: flex;
    align-items: center;
    gap: 10px;
    margin-left: 14px;
}

.launch button {
    width: 24px;
    height: 22px;
}

.launch .pressed {
    margin-left: -4px;
    background: #efede8;
    border: 1px solid;
    border-color: #404040 #fff #fff #404040;
    box-shadow: 3px 0 0 #d5d1c9, 4px 0 0 #fff, 7px 0 0 #d5d1c9, 8px 0 0 #fff;
}

.tray {
    display: flex;
    align-items: center;
    gap: 8px;
    height: 22px;
    margin-left: auto;
    padding: 0 1px 0 4px;
    color: #000;
    border: 1px solid;
    border-color: #808080 #fff #fff #808080;
}

.tray time {
    margin: 0 1px 0 7px;
}
```
